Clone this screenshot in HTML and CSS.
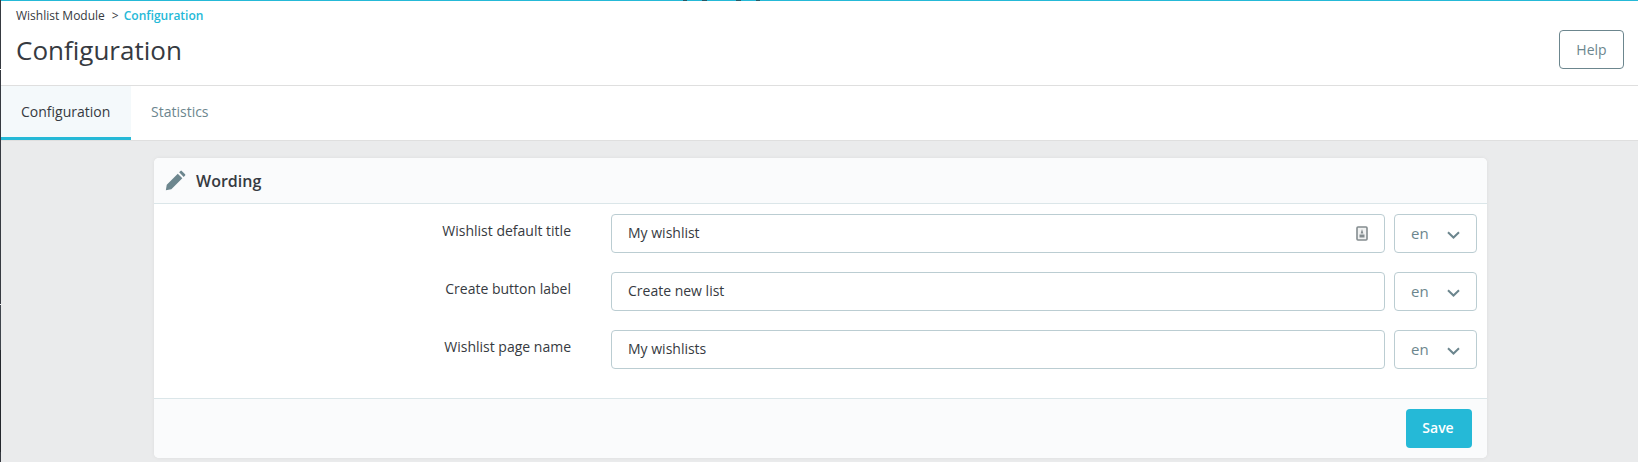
FILE: index.html
```html
<!DOCTYPE html>
<html>
<head>
	<title>Configuration</title>
	<link rel="stylesheet" href="styles.css">
</head>
<body>
	<div class="page">
		<div class="header">
			<div>
				<div class="breadcrumb"><span>Wishlist Module</span><span class="sep">&gt;</span><a href="#">Configuration</a></div>
				<h1>Configuration</h1>
			</div>
			<a class="help" href="#">Help</a>
		</div>
		<ul class="tabs">
			<li class="active"><a href="#">Configuration</a></li>
			<li><a href="#">Statistics</a></li>
		</ul>
		<div class="content">
			<div class="card">
				<div class="card-title">
					<svg class="pencil" width="22" height="22" viewBox="0 0 24 24"><path d="M2 22l1-6L15 4l5 5L8 21zM16.500 2.500l1.500-1.500a1 1 0 0 1 1.400 0l3.600 3.600a1 1 0 0 1 0 1.400l-1.500 1.500z"/></svg>
					<span>Wording</span>
				</div>
				<div class="card-body">
					<div class="row">
						<label>Wishlist default title</label>
						<div class="input"><span>My wishlist</span>
							<svg class="tr-icon" width="12" height="15" viewBox="0 0 12 15"><rect x="1" y="1" width="10" height="13" rx="1" fill="#f1f2f2" stroke="#848c8f" stroke-width="1.600"/><path d="M6 3l1.400 4.500H4.600zM3.500 8.500h5v3h-5z" fill="#848c8f"/></svg>
						</div>
						<div class="lang"><span>en</span><svg width="13" height="8" viewBox="0 0 13 8"><path d="M1 1.200l5.500 5.300 5.500-5.300" fill="none" stroke="#6c868e" stroke-width="2"/></svg></div>
					</div>
					<div class="row">
						<label>Create button label</label>
						<div class="input"><span>Create new list</span></div>
						<div class="lang"><span>en</span><svg width="13" height="8" viewBox="0 0 13 8"><path d="M1 1.200l5.500 5.300 5.500-5.300" fill="none" stroke="#6c868e" stroke-width="2"/></svg></div>
					</div>
					<div class="row">
						<label>Wishlist page name</label>
						<div class="input"><span>My wishlists</span></div>
						<div class="lang"><span>en</span><svg width="13" height="8" viewBox="0 0 13 8"><path d="M1 1.200l5.500 5.300 5.500-5.300" fill="none" stroke="#6c868e" stroke-width="2"/></svg></div>
					</div>
				</div>
				<div class="card-footer">
					<button class="save">Save</button>
				</div>
			</div>
		</div>
	</div>
</body>
</html>
```

FILE: styles.css
```css
* {
	margin: 0;
	padding: 0;
	box-sizing: border-box;
}

html, body {
	height: 100%;
	overflow: hidden;
}

body {
	background-color: #eaebec;
	font-family: "Open Sans", sans-serif;
	color: #363a41;
	font-size: 14px;
}

a {
	text-decoration: none;
}

.page {
	height: 100%;
	border-left: 1px solid #363a41;
	border-image: linear-gradient(to bottom, #363a41 70px, #fff 70px, #fff 71px, #363a41 71px, #363a41 304px, #eaebec 304px, #eaebec 305px, #3f444c 305px, #3f444c 349px, #24272c 349px, #24272c 451px, #363a41 451px) 1;
}

.header {
	height: 86px;
	background-color: #fff;
	background-image: linear-gradient(to right, #25b9d7 682px, #245a68 682px, #245a68 686px, #25b9d7 686px, #25b9d7 701px, #245a68 701px, #245a68 706px, #25b9d7 706px, #25b9d7 735px, #245a68 735px, #245a68 740px, #25b9d7 740px, #25b9d7 755px, #245a68 755px, #245a68 759px, #25b9d7 759px);
	background-size: 100% 1px;
	background-repeat: no-repeat;
	border-bottom: 1px solid #dfdfdf;
	padding: 1px 14px 0 15px;
	display: flex;
	justify-content: space-between;
}

.breadcrumb {
	font-size: 12px;
	line-height: 16px;
	margin-top: 7px;
}

.breadcrumb .sep {
	margin: 0 5px 0 7px;
}

.breadcrumb a {
	color: #25b9d7;
	font-weight: 600;
}

h1 {
	font-size: 26px;
	font-weight: 400;
	line-height: 36px;
	margin-top: 8px;
}

.help {
	width: 65px;
	height: 39px;
	margin-top: 29px;
	border: 1px solid #6c868e;
	border-radius: 4px;
	color: #6c868e;
	display: flex;
	align-items: center;
	justify-content: center;
}

.tabs {
	list-style: none;
	display: flex;
	height: 55px;
	background-color: #fff;
	border-bottom: 1px solid #dfdfdf;
}

.tabs a {
	display: block;
	height: 54px;
	padding: 0 20px;
	line-height: 51px;
	color: #6c868e;
	font-size: 14px;
}

.tabs .active a {
	width: 130px;
	padding: 0 0 0 20px;
	background-color: #f4f9fb;
	border-bottom: 3px solid #25b9d7;
	color: #363a41;
}

.content {
	padding: 17px 151px 0 153px;
}

.card {
	background-color: #fff;
	border-radius: 5px;
	box-shadow: 0 0 4px 0 rgba(0, 0, 0, .06);
	height: 300px;
}

.card-title {
	height: 46px;
	background-color: #fafbfc;
	border-bottom: 1px solid #dbe6e9;
	border-radius: 5px 5px 0 0;
	display: flex;
	align-items: center;
	padding-left: 10px;
	font-size: 16px;
	font-weight: 600;
}

.pencil {
	fill: #6c868e;
	margin-right: 10px;
}

.card-body {
	height: 194px;
	padding-top: 10px;
}

.row {
	display: flex;
	align-items: center;
	height: 39px;
	margin-bottom: 19px;
}

.row label {
	width: 417px;
	text-align: right;
	margin-right: 40px;
	position: relative;
	top: -3px;
}

.input, .lang {
	height: 39px;
	border: 1px solid #bbcdd2;
	border-radius: 4px;
	display: flex;
	align-items: center;
}

.input {
	width: 774px;
	padding: 0 16px;
	justify-content: space-between;
}

.input span {
	position: relative;
	top: -1px;
}

.lang {
	width: 83px;
	margin-left: 9px;
	padding: 0 16px;
	color: #6c868e;
	font-size: 15px;
	justify-content: space-between;
}

.lang span {
	position: relative;
	top: -1px;
}

.lang svg {
	margin-top: 3px;
}

.card-footer {
	height: 60px;
	background-color: #fafbfc;
	border-top: 1px solid #dbe6e9;
	border-radius: 0 0 5px 5px;
	display: flex;
	justify-content: flex-end;
	padding: 10px 15px 0 0;
}

.save {
	width: 66px;
	height: 39px;
	padding: 0 2px 2px 0;
	background-color: #25b9d7;
	border: 0;
	border-radius: 4px;
	color: #fff;
	font-family: "Open Sans", sans-serif;
	font-size: 14px;
	font-weight: 600;
}
```
